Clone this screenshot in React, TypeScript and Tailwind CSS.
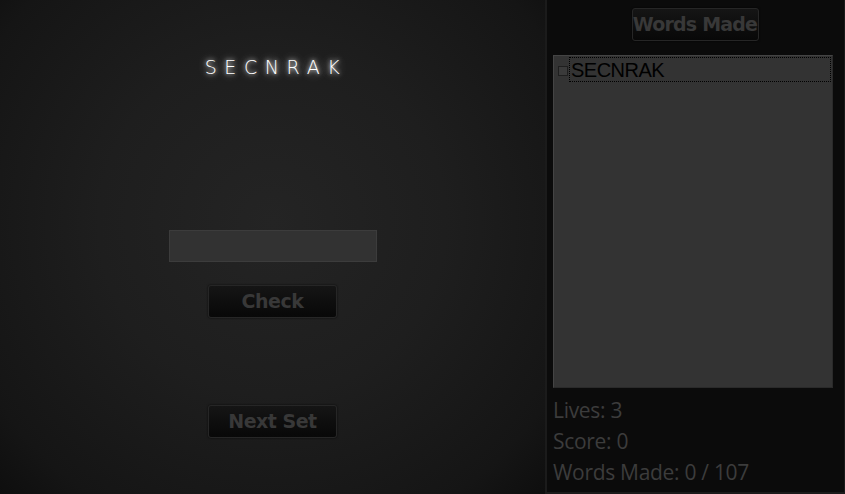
import React from "react";

const words = ["SECNRAK"];

function DarkButton({ label, className = "" }: { label: string; className?: string }) {
  return (
    <button
      className={`h-[33px] whitespace-nowrap rounded-[3px] border border-[#262626] bg-gradient-to-b from-[#151515] to-[#080808] text-[19px] font-bold text-[#383838] shadow-[0_0_2px_rgba(0,0,0,0.8)] [font-family:'DejaVu_Sans',sans-serif] tracking-[-0.5px] ${className}`}
    >
      {label}
    </button>
  );
}

export default function App() {
  return (
    <div className="flex h-[494px] w-[845px] overflow-hidden bg-[#0a0a0a] [font-family:'Liberation_Sans',Arial,sans-serif]">
      {/* play area */}
      <div className="relative flex w-[545px] flex-col items-center bg-[radial-gradient(ellipse_at_50%_45%,#242424_0%,#1e1e1e_45%,#151515_85%,#0e0e0e_100%)]">
        <div className="mt-[53px] pl-[7px] text-[19px] tracking-[7.6px] text-white [font-family:'DejaVu_Sans',sans-serif] font-extralight [text-shadow:0_0_4px_rgba(255,255,255,1),0_0_10px_rgba(255,255,255,0.6),0_0_18px_rgba(255,255,255,0.3)]">
          SECNRAK
        </div>
        <input
          className="mt-[148px] h-[32px] w-[208px] border border-[#3c3c3c] bg-[#323232] px-2 text-[#ccc] outline-none"
          aria-label="guess"
        />
        <DarkButton label="Check" className="mt-[23px] w-[129px]" />
        <DarkButton label="Next Set" className="mt-[87px] w-[129px]" />
      </div>

      {/* side panel */}
      <div className="flex w-[300px] flex-col border-l-2 border-b-2 border-r border-[#1b1b1b] bg-[#0b0b0b] pl-[6px] pr-[11px]">
        <div className="flex justify-center pt-[8px] pl-[4px]">
          <DarkButton label="Words Made" className="w-[127px] text-[19px] tracking-[-0.8px]" />
        </div>
        <div className="mt-[14px] h-[333px] border border-t-[#444] border-l-[#444] border-r-[#2a2a2a] border-b-[#2a2a2a] bg-[#333333] p-[1px]">
          {words.map((w) => (
            <div key={w} className="flex items-center">
              <span className="ml-[3px] mr-[1px] mt-[2px] h-[10px] w-[10px] border border-[#1e1e1e] bg-[#3a3a3a]" />
              <span className="flex h-[25px] flex-1 items-center border border-dotted border-black pl-[1px] text-[20px] text-black tracking-[-0.5px]">
                {w}
              </span>
            </div>
          ))}
        </div>
        <div className="mt-[10px] flex flex-col gap-[6px] text-[21px] leading-[25px] text-[#3c3c3c] [font-family:'Open_Sans',sans-serif] tracking-[-0.3px]">
          <div>Lives: 3</div>
          <div>Score: 0</div>
          <div>Words Made: 0 / 107</div>
        </div>
      </div>
    </div>
  );
}
